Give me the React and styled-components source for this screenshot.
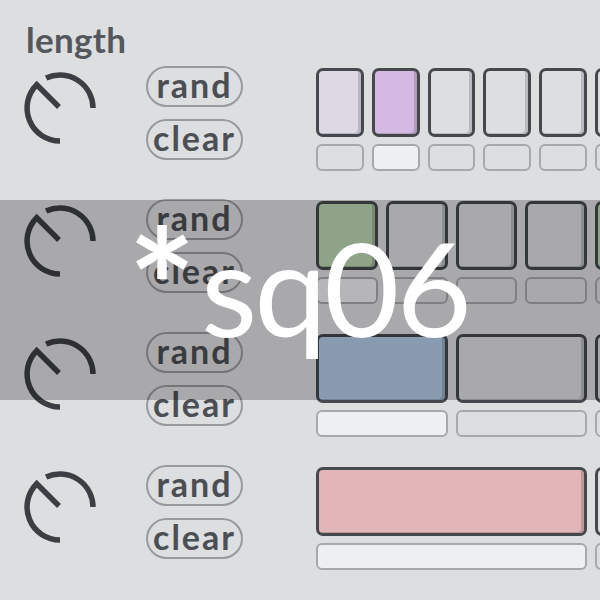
import React from 'react';
import styled, { createGlobalStyle } from 'styled-components';

const GlobalStyle = createGlobalStyle`
  html, body {
    margin: 0;
    padding: 0;
    background: #dddee0;
    overflow: hidden;
  }
`;

const BG = '#dddee0';
const LIGHT = '#eeeff1';

// one unit of the step grid is 279px wide; each row splits it into `per` cells
const UNIT = 279;
const GAP = 8;

const tracks = [
  { per: 5, pads: ['#dcd9e4', '#d4b9e2', BG, BG, BG, BG, BG, BG, BG, BG], lit: 1 },
  { per: 4, pads: ['#bcd6b3', BG, BG, BG, '#bcd6b3', BG, BG, BG], lit: 0 },
  { per: 2, pads: ['#b4cbe6', BG, BG, BG], lit: 0 },
  { per: 1, pads: ['#e2b6b9', BG], lit: 0 },
];

const Page = styled.div`
  position: relative;
  width: 600px;
  height: 600px;
  overflow: hidden;
  background: ${BG};
  font-family: Lato, "Open Sans", sans-serif;
`;

const Header = styled.div`
  height: 68px;
  padding: 22px 0 0 26px;
  box-sizing: border-box;
`;

const Label = styled.div`
  font-size: 35px;
  font-weight: 700;
  line-height: 1;
  letter-spacing: 0.3px;
  color: #54575b;
`;

const Track = styled.div`
  display: flex;
  align-items: flex-start;
  height: 133px;
`;

const KnobWrap = styled.div`
  flex-shrink: 0;
  width: 80px;
  height: 80px;
  margin-left: 20px;
  & svg {
    display: block;
  }
`;

const Buttons = styled.div`
  flex-shrink: 0;
  display: flex;
  flex-direction: column;
  gap: 12px;
  width: 97px;
  margin-left: 46px;
  margin-top: -2px;
`;

const Pill = styled.div`
  height: 41px;
  box-sizing: border-box;
  border: 2px solid #98999c;
  border-radius: 21px;
  display: flex;
  align-items: center;
  justify-content: center;
  padding-bottom: 3px;
  font-size: 34px;
  font-weight: 700;
  letter-spacing: 2px;
  line-height: 1;
  color: #4b4e53;
`;

const Steps = styled.div`
  flex-shrink: 0;
  display: flex;
  flex-direction: column;
  gap: 7px;
  margin-left: 73px;
`;

const Row = styled.div`
  display: flex;
  gap: ${GAP}px;
`;

const Pad = styled.div`
  flex-shrink: 0;
  width: ${p => p.w}px;
  height: 69px;
  box-sizing: border-box;
  border: 3px solid #45484d;
  border-radius: 7px;
  background: ${p => p.color};
  box-shadow: inset -3px -1px 0 rgba(0, 0, 0, 0.16);
`;

const Bar = styled.div`
  flex-shrink: 0;
  width: ${p => p.w}px;
  height: 27px;
  box-sizing: border-box;
  border: 2px solid #a6a8ab;
  border-radius: 6px;
  background: ${p => (p.lit ? LIGHT : BG)};
`;

const Overlay = styled.div`
  position: absolute;
  left: 0;
  right: 0;
  top: 200px;
  height: 200px;
  background: rgba(0, 0, 0, 0.235);
  padding: 22px 0 0 128px;
  box-sizing: border-box;
`;

const Title = styled.div`
  font-family: Lato, "Open Sans", sans-serif;
  font-weight: 400;
  font-size: 130px;
  line-height: 1;
  letter-spacing: -3px;
  color: #ffffff;
  white-space: nowrap;
`;

const Star = styled.span`
  font-size: 160px;
  font-weight: 700;
  line-height: 0;
  vertical-align: -9px;
  margin-right: 8px;
`;

const Knob = () => (
  <svg width="80" height="80" viewBox="0 0 80 80">
    <g fill="none" stroke="#3b3e43" strokeWidth="5.5" strokeLinejoin="miter">
      <path d="M40 73 A33 33 0 0 1 16.7 16.7 L39 39" />
      <path d="M26.1 10.1 A33 33 0 0 1 73 40" />
    </g>
  </svg>
);

const App = () => (
  <Page>
    <GlobalStyle />
    <Header>
      <Label>length</Label>
    </Header>
    {tracks.map((t, i) => {
      const w = UNIT / t.per - GAP;
      return (
        <Track key={i}>
          <KnobWrap>
            <Knob />
          </KnobWrap>
          <Buttons>
            <Pill>rand</Pill>
            <Pill>clear</Pill>
          </Buttons>
          <Steps>
            <Row>
              {t.pads.map((c, j) => (
                <Pad key={j} w={w} color={c} />
              ))}
            </Row>
            <Row>
              {t.pads.map((c, j) => (
                <Bar key={j} w={w} lit={j === t.lit} />
              ))}
            </Row>
          </Steps>
        </Track>
      );
    })}
    <Overlay>
      <Title>
        <Star>*</Star>sq06
      </Title>
    </Overlay>
  </Page>
);

export default App;
